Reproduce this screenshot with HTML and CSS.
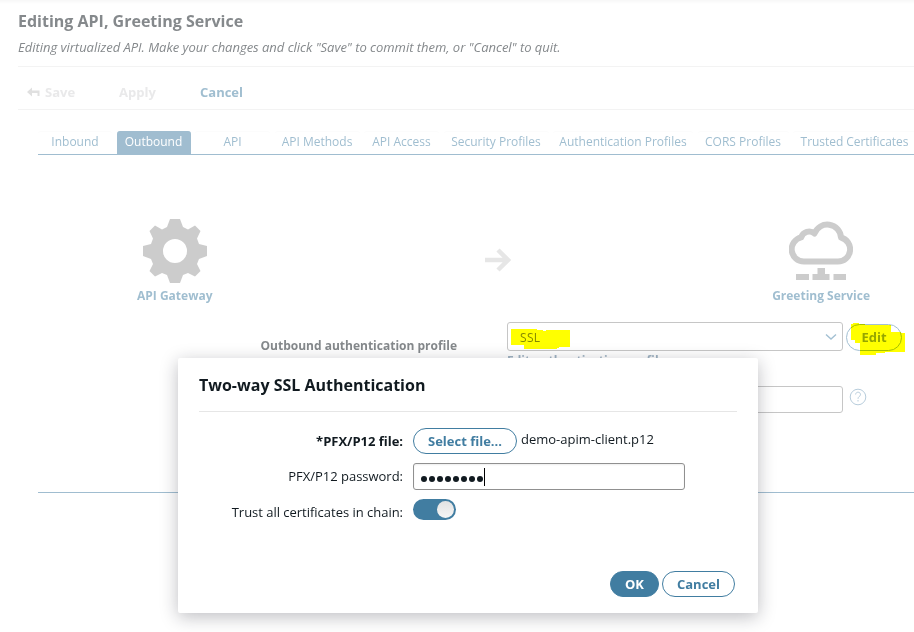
FILE: index.html
```html
<!DOCTYPE html>
<html lang="en">
<head>
<meta charset="utf-8">
<title>Editing API, Greeting Service</title>
<link rel="stylesheet" href="styles.css">
</head>
<body>
<div class="page">
  <header class="head">
    <h1><span>Editing API, Greeting Service</span></h1>
    <p>Editing virtualized API. Make your changes and click "Save" to commit them, or "Cancel" to quit.</p>
  </header>
  <div class="toolbar">
    <span class="tool save"><svg width="13" height="10" viewBox="0 0 13 10"><path d="M0 5L5 0.5V3.5H12.5V9H10.5V6H5V9.5Z" fill="#e0e0e0"/></svg>Save</span>
    <span class="tool apply">Apply</span>
    <span class="tool cancel">Cancel</span>
  </div>
  <nav class="tabs">
    <span class="tab">Inbound</span>
    <span class="tab active">Outbound</span>
    <span class="tab">API</span>
    <span class="tab">API Methods</span>
    <span class="tab">API Access</span>
    <span class="tab">Security Profiles</span>
    <span class="tab">Authentication Profiles</span>
    <span class="tab">CORS Profiles</span>
    <span class="tab">Trusted Certificates</span>
  </nav>
  <section class="panel">
    <div class="flow">
      <div class="node">
        <svg width="64" height="64" viewBox="0 0 64 64"><path fill="#ccc" fill-rule="evenodd" d="M27 0H37L40 8L45 10.500L52 6.500L57.500 12L54 19.500L56 25L64 27V37L56 40L54 45L57.500 52L52 57.500L45 54L40 56L37 64H27L24 56L19 54L12 57.500L6.500 52L10 45L8 40L0 37V27L8 25L10 19.500L6.500 12L12 6.500L19 10.500L24 8ZM32 20A12 12 0 1 0 32 44A12 12 0 1 0 32 20Z"/></svg>
        <b>API Gateway</b>
      </div>
      <svg class="arrow" width="26" height="24" viewBox="0 0 26 24"><path d="M0 12H22M13 2L23 12L13 22" fill="none" stroke="#e6e6e6" stroke-width="4.500"/></svg>
      <div class="node">
        <svg width="64" height="64" viewBox="0 0 64 64"><path d="M15 42.500A12.200 12.200 0 0 1 12.200 18.400A8.200 8.200 0 0 1 25.500 14.500A13.700 13.700 0 0 1 52 18.500A12.200 12.200 0 0 1 49 42.500Z" fill="none" stroke="#ccc" stroke-width="6" stroke-linejoin="round"/><path d="M28.500 49H36V55H40.500V61H23.500V55H28.500ZM7 55H20V61H7ZM44.500 55H57V61H44.500Z" fill="#ccc"/></svg>
        <b>Greeting Service</b>
      </div>
    </div>
    <div class="row">
      <label>Outbound authentication profile</label>
      <div class="field">
        <div class="select"><span>SSL</span><svg width="12" height="8" viewBox="0 0 12 8"><path d="M1 1.500L6 6L11 1.500" fill="none" stroke="#a3c0d3" stroke-width="1.400"/></svg>
          <svg class="mark mark-ssl" width="60" height="22" viewBox="0 0 60 22"><path d="M0 0H26V1H32V2H35V1H59V18H48V19H46V20H13V16H0Z" fill="#ff0"/></svg>
        </div>
        <b class="hint">Edit authentication profile</b>
      </div>
      <div class="edit">Edit<svg class="mark mark-edit" width="56" height="33" viewBox="0 0 56 33"><path d="M0 1H2V0H8V1H14V2H40V9H50V10H54V29H34V30H25V32H9V20H4V17H0Z" fill="#ff0"/></svg></div>
    </div>
    <div class="row second">
      <div class="input"></div>
      <svg width="18" height="18" viewBox="0 0 18 18"><circle cx="9" cy="9" r="7.800" fill="none" stroke="#b8cddc" stroke-width="1"/><path d="M6.600 6.500C6.800 3.300 11.600 3.500 11.500 6.700C11.400 8.500 9 8.500 9 10.800M9 12V13.500" fill="none" stroke="#b8cddc" stroke-width="1"/></svg>
    </div>
  </section>
</div>
<div class="dialog">
  <h2><span>Two-way SSL Authentication</span></h2>
  <div class="form">
    <label class="strong">*PFX/P12 file:</label>
    <div class="file"><button class="btn select-file">Select file...</button><span>demo-apim-client.p12</span></div>
    <label>PFX/P12 password:</label>
    <div class="password"><i></i><i></i><i></i><i></i><i></i><i></i><i></i><i></i><span class="caret"></span></div>
    <label class="trust">Trust all certificates in chain:</label>
    <div class="toggle"><span></span></div>
  </div>
  <footer><button class="btn ok">OK</button><button class="btn no">Cancel</button></footer>
</div>
</body>
</html>
```

FILE: styles.css
```css
* { box-sizing: border-box; }
body { margin: 0; width: 914px; height: 632px; overflow: hidden; position: relative; background: #fff; font: 13px/18px "Open Sans", "Noto Sans", sans-serif; color: #111a20; }
svg { display: block; flex: none; }
.page { height: 632px; background: linear-gradient(#f7f7f7, #fff 4px); padding: 10px 0 0 18px; }
.head { height: 57px; border-bottom: 1px solid #f3f3f3; color: #85898c; }
h1 { margin: 0; font-size: 16px; line-height: 22px; font-weight: 700; }
.head p { margin: 6px 0 0; font-style: italic; letter-spacing: -.02px; white-space: nowrap; }
.toolbar { display: flex; align-items: center; height: 43px; padding: 8px 0 0 9px; border-bottom: 1px solid #f3f3f3; font-weight: 700; color: #e9e9ea; }
.tool { display: flex; align-items: center; }
.save { width: 92px; gap: 5px; }
.apply { width: 81px; }
.cancel { color: #a0bed0; }
.tabs { margin: 21px 0 0 20px; height: 24px; border-bottom: 1px solid #a0bdd0; display: grid; grid-template-columns: 74px 74px 75px 85px 75px 105px 140px 91px 123px; column-gap: 4.500px; overflow: hidden; color: #a0bed0; font-size: 12px; }
.tab { display: flex; justify-content: center; align-items: center; height: 23px; padding-bottom: 2px; border-radius: 3px 3px 0 0; border-top: 1px solid #fcfcfc; white-space: nowrap; }
.tab:last-child { letter-spacing: -.05px; }
.active { background: #a0bdd0; color: #fff; border-color: #a0bdd0; }
.panel { margin-left: 20px; height: 338px; border-bottom: 1px solid #a0bdd0; padding-top: 64px; }
.flow { display: flex; justify-content: space-between; padding: 0 44px 0 99px; height: 86px; font-size: 12px; color: #a0bed0; }
.node { display: flex; flex-direction: column; align-items: center; gap: 4px; white-space: nowrap; }
.arrow { margin: 29px 0 0 11px; }
.row { display: flex; align-items: flex-start; margin-top: 17px; height: 36px; }
.row label { width: 419px; text-align: right; margin: 15px 50px 0 0; font-weight: 700; font-size: 12px; color: #85898c; }
.field { width: 336px; }
.select { position: relative; display: flex; align-items: center; justify-content: space-between; height: 29px; padding: 0 5px 0 12px; border: 1px solid #c6c6c6; border-radius: 3px; font-size: 12px; color: #85898c; }
.select span { padding-top: 2px; letter-spacing: .3px; }
.mark { position: absolute; mix-blend-mode: multiply; }
.mark-ssl { left: 3px; top: 6px; }
.mark-edit { left: 4px; top: -2px; }
.hint { display: block; margin-top: 1px; font-size: 12px; color: #a0b4c3; }
.edit { position: relative; width: 56px; height: 27px; margin: 2px 0 0 3px; border: 1px solid #a3c0d3; border-radius: 14px; font-weight: 700; color: #96a6ad; text-align: center; line-height: 25px; }
.second { margin: 27px 0 0 469px; gap: 6px; }
.input { width: 336px; height: 27px; border: 1px solid #c6c6c6; border-radius: 3px; margin-top: 1px; }
.second svg { margin-top: 3px; }
.dialog { position: absolute; left: 178px; top: 358px; width: 580px; height: 255px; padding: 0 21px; background: #fff; border-radius: 2px; box-shadow: 0 4px 18px rgba(20,20,35,.28); }
h2 { margin: 0 0 16px; height: 54px; padding-top: 16px; border-bottom: 1px solid #e6e6e6; font-size: 16px; line-height: 22px; font-weight: 700; }
.form { display: grid; grid-template-columns: 204px 272px; column-gap: 10px; grid-template-rows: 35px 36px 32px; }
.form label { text-align: right; padding-top: 4px; white-space: nowrap; letter-spacing: -.02px; }
.strong { font-weight: 700; }
.file { display: flex; align-items: flex-start; gap: 4px; }
.file span { padding-top: 2px; }
.btn { font: 700 13px/18px "Open Sans", "Noto Sans", sans-serif; border: 1px solid #417da1; border-radius: 13px; background: #fff; color: #417da1; height: 26px; padding: 0 0 1px; }
.select-file { width: 104px; }
.password { height: 27px; border: 1px solid #909090; border-radius: 3px; display: flex; align-items: center; gap: 2px; padding: 5px 0 0 7px; box-shadow: inset 0 1px 2px #eee; }
.password i { width: 6px; height: 6px; border-radius: 50%; background: #111a20; }
.caret { width: 1px; height: 18px; margin: -5px 0 0 -1px; background: #000; }
.toggle { width: 43px; height: 21px; border-radius: 11px; background: #417da1; display: flex; justify-content: flex-end; padding: 2px; }
.toggle span { width: 17px; height: 17px; border-radius: 50%; background: linear-gradient(#e2e2e2, #f5f5f5); }
footer { display: flex; justify-content: flex-end; gap: 3px; padding: 40px 2px 0 0; }
.ok { width: 49px; background: #417da1; color: #fff; }
.no { width: 73px; }
```
